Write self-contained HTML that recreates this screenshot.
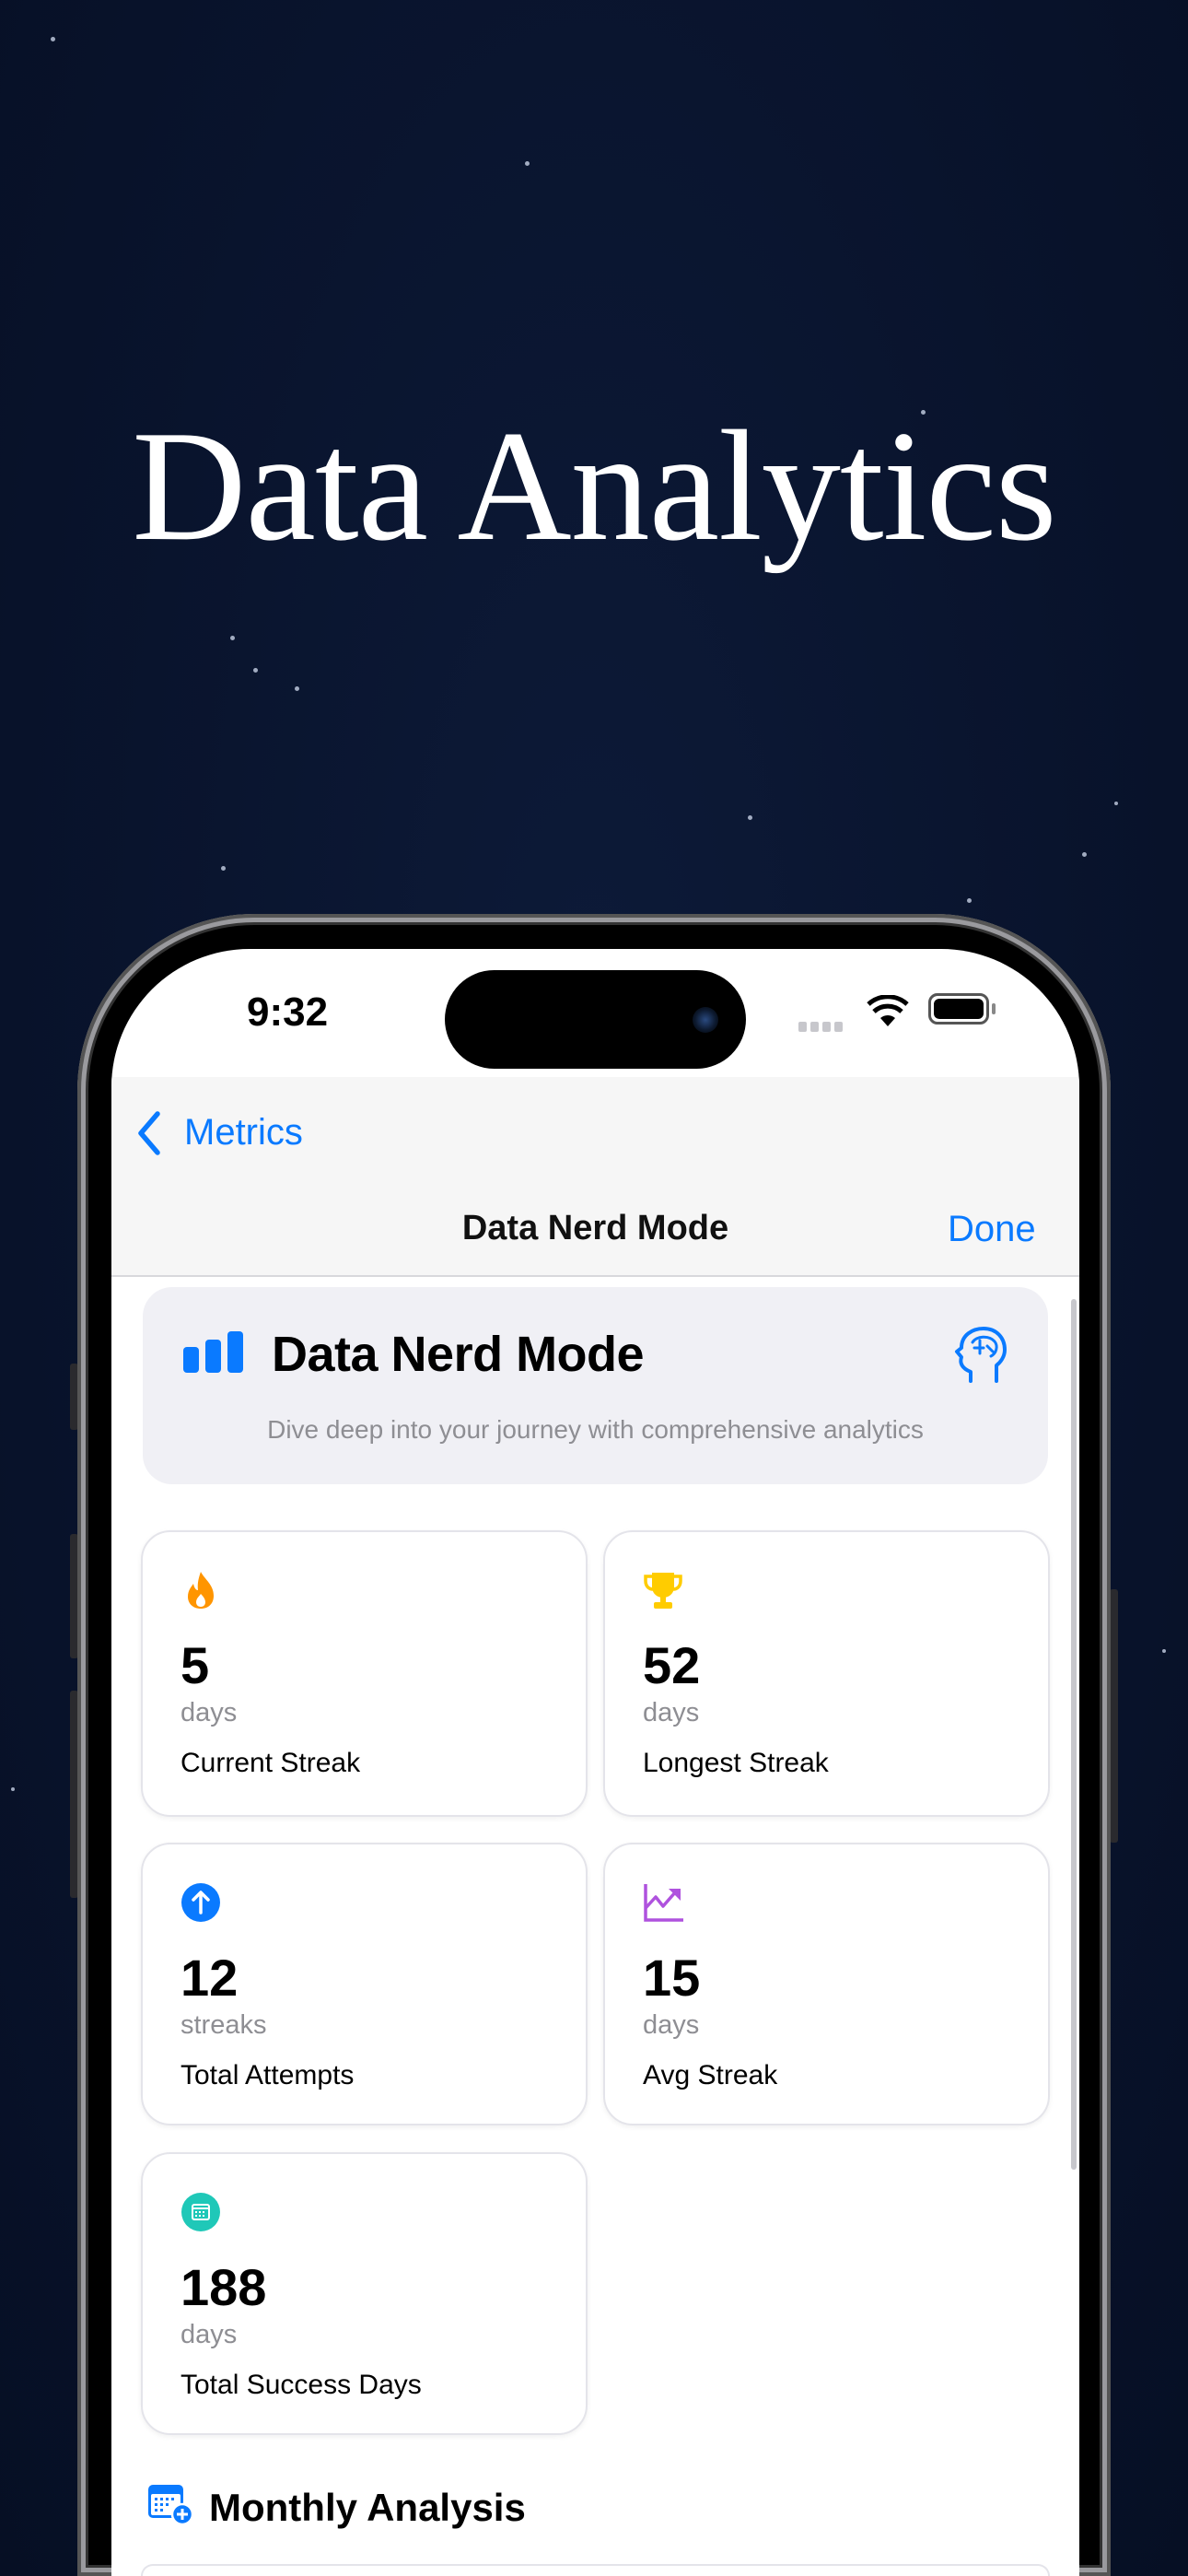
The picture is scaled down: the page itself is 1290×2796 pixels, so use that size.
<!DOCTYPE html>
<html><head><meta charset="utf-8"><style>
*{margin:0;padding:0;box-sizing:border-box}
html{width:1290px;height:2796px;overflow:hidden}
body{width:1290px;height:2796px;overflow:hidden;background:#0a1530;position:relative;font-family:"Liberation Sans",sans-serif}
.bg{position:absolute;inset:0;background:radial-gradient(ellipse at 50% 40%,#0d1a38 0%,#08122a 70%,#060f24 100%)}
.star{position:absolute;width:5px;height:5px;border-radius:50%;background:#c8d2e6;opacity:.8}
h1{position:absolute;top:430px;left:0;width:1290px;text-align:center;font-family:"Liberation Serif",serif;font-weight:400;font-size:172px;color:#fff;letter-spacing:-1px;white-space:nowrap}
.btn{position:absolute;background:#2a2a2e;border-radius:3px}
.frame{position:absolute;left:84px;top:992px;width:1122px;height:1804px;border-radius:192px 192px 0 0;background:#000;box-shadow:inset 0 0 0 4px #555,inset 0 0 0 9px #9a9a9e,inset 0 0 0 12px #333}
.screen{position:absolute;left:121px;top:1030px;width:1051px;height:1766px;border-radius:150px 150px 0 0;background:#fff;overflow:hidden}
.island{position:absolute;left:362px;top:23px;width:327px;height:107px;border-radius:54px;background:#000}
.cam{position:absolute;right:30px;top:40px;width:28px;height:28px;border-radius:50%;background:radial-gradient(circle,#2a4a80 0,#0d1a30 55%,#000 100%)}
.time{position:absolute;left:147px;top:44px;font-size:44px;font-weight:700;color:#000}
.nav{position:absolute;left:0;top:139px;width:1051px;height:217px;background:#f6f6f6;border-bottom:2px solid #d8d8dc}
.blue{color:#0a7aff}
.card{position:absolute;background:#fff;border:2px solid #e4e4ea;border-radius:32px;box-shadow:0 2px 6px rgba(0,0,0,.06)}
.card .ic{position:absolute;left:41px;top:41px;width:44px;height:44px}
.card .num{position:absolute;left:41px;top:112px;font-size:56px;font-weight:700;color:#000}
.card .unit{position:absolute;left:41px;top:180px;font-size:29px;color:#8e8e93}
.card .lab{position:absolute;left:41px;top:234px;font-size:30px;color:#000}
</style></head><body>
<div class="bg"></div>
<div class="star" style="left:55px;top:40px"></div>
<div class="star" style="left:570px;top:175px"></div>
<div class="star" style="left:250px;top:690px"></div>
<div class="star" style="left:275px;top:725px"></div>
<div class="star" style="left:320px;top:745px"></div>
<div class="star" style="left:812px;top:885px"></div>
<div class="star" style="left:1050px;top:975px"></div>
<div class="star" style="left:1175px;top:925px"></div>
<div class="star" style="left:1000px;top:445px"></div>
<div class="star" style="left:240px;top:940px"></div>
<div class="star" style="left:1210px;top:870px;width:4px;height:4px"></div>
<div class="star" style="left:12px;top:1940px;width:4px;height:4px"></div>
<div class="star" style="left:1262px;top:1790px;width:4px;height:4px"></div>
<h1>Data Analytics</h1>
<div class="btn" style="left:76px;top:1480px;width:9px;height:72px"></div>
<div class="btn" style="left:76px;top:1665px;width:9px;height:135px"></div>
<div class="btn" style="left:76px;top:1835px;width:9px;height:225px"></div>
<div class="btn" style="left:1205px;top:1725px;width:9px;height:275px"></div>
<div class="frame"></div>
<div class="screen">
  <div class="time">9:32</div>
  <div class="island"><div class="cam"></div></div>
  <div style="position:absolute;left:746px;top:79px;display:flex;gap:4px"><span style="width:9px;height:11px;background:#c7c7cc;border-radius:2px"></span><span style="width:9px;height:11px;background:#c7c7cc;border-radius:2px"></span><span style="width:9px;height:11px;background:#c7c7cc;border-radius:2px"></span><span style="width:9px;height:11px;background:#c7c7cc;border-radius:2px"></span></div>
  <svg style="position:absolute;left:820px;top:50px" width="46" height="36" viewBox="0 0 46 36"><path d="M23 34 L15 25 A12 12 0 0 1 31 25 Z" fill="#000"/><path d="M8 18 A22 22 0 0 1 38 18" stroke="#000" stroke-width="5" fill="none"/><path d="M2 10 A31 31 0 0 1 44 10" stroke="#000" stroke-width="5" fill="none"/></svg>
  <div style="position:absolute;left:887px;top:48px;width:66px;height:34px;border:3px solid #555;border-radius:10px;padding:3px"><div style="width:100%;height:100%;background:#000;border-radius:6px"></div></div>
  <div style="position:absolute;left:956px;top:59px;width:4px;height:12px;background:#888;border-radius:2px"></div>
  <div class="nav">
    <svg style="position:absolute;left:26px;top:36px" width="30" height="50" viewBox="0 0 30 50"><path d="M24 4 L6 25 L24 46" stroke="#0a7aff" stroke-width="5.5" fill="none" stroke-linecap="round" stroke-linejoin="round"/></svg>
    <div class="blue" style="position:absolute;left:79px;top:38px;font-size:40px">Metrics</div>
    <div style="position:absolute;left:0;width:1051px;text-align:center;top:143px;font-size:38px;font-weight:700;color:#111">Data Nerd Mode</div>
    <div class="blue" style="position:absolute;left:908px;top:143px;font-size:40px">Done</div>
  </div>
  <div style="position:absolute;left:34px;top:367px;width:983px;height:214px;background:#f0f0f5;border-radius:32px">
    <div style="position:absolute;left:44px;top:65px;width:17px;height:28px;background:#0a7aff;border-radius:4px"></div>
    <div style="position:absolute;left:68px;top:57px;width:17px;height:36px;background:#0a7aff;border-radius:4px"></div>
    <div style="position:absolute;left:92px;top:48px;width:17px;height:45px;background:#0a7aff;border-radius:4px"></div>
    <div style="position:absolute;left:140px;top:42px;font-size:54px;font-weight:700;color:#000;letter-spacing:-.5px">Data Nerd Mode</div>
    <svg style="position:absolute;left:881px;top:42px" width="58" height="64" viewBox="0 0 58 64"><path d="M18 60 V50 C8 46 6 40 8 34 L3 28 L8 24 C8 10 20 3 32 3 C46 3 55 13 55 26 C55 34 50 40 46 43 V60" stroke="#0a7aff" stroke-width="4" fill="none" stroke-linejoin="round" stroke-linecap="round"/><path d="M20 18 C24 11 38 10 44 17 C48 22 46 30 40 33 M22 24 H32 M28 16 V30 M36 22 L42 28" stroke="#0a7aff" stroke-width="3" fill="none" stroke-linecap="round"/></svg>
    <div style="position:absolute;left:0;width:983px;text-align:center;top:139px;font-size:28px;color:#8e8e93">Dive deep into your journey with comprehensive analytics</div>
  </div>
  <div style="position:absolute;left:1042px;top:380px;width:6px;height:945px;background:#c7c7cc;border-radius:3px"></div>

  <div class="card" style="left:32px;top:631px;width:485px;height:311px">
    <svg class="ic" viewBox="0 0 44 44"><path d="M22 2 C26 10 36 16 36 28 C36 37 30 42 22 42 C14 42 8 37 8 29 C8 22 12 18 14 15 C15 20 17 22 19 22 C18 14 20 8 22 2 Z" fill="#ff9500"/><path d="M22 26 C25 29 27 32 27 35 C27 38 25 40 22 40 C19 40 17 38 17 35 C17 31 20 29 22 26Z" fill="#fff"/></svg>
    <div class="num">5</div><div class="unit">days</div><div class="lab">Current Streak</div>
  </div>
  <div class="card" style="left:534px;top:631px;width:485px;height:311px">
    <svg class="ic" viewBox="0 0 44 44"><path d="M10 3 H34 V18 C34 26 28 30 22 30 C16 30 10 26 10 18 Z" fill="#ffcc00"/><path d="M10 7 H3 V12 C3 18 7 21 11 21 M34 7 H41 V12 C41 18 37 21 33 21" stroke="#ffcc00" stroke-width="3.5" fill="none"/><rect x="19" y="29" width="6" height="7" fill="#ffcc00"/><rect x="12" y="35" width="20" height="7" rx="2" fill="#ffcc00"/></svg>
    <div class="num">52</div><div class="unit">days</div><div class="lab">Longest Streak</div>
  </div>
  <div class="card" style="left:32px;top:970px;width:485px;height:307px">
    <svg class="ic" viewBox="0 0 44 44"><circle cx="22" cy="22" r="21" fill="#0a7aff"/><path d="M22 33 V12 M14 19 L22 11 L30 19" stroke="#fff" stroke-width="3.5" fill="none" stroke-linecap="round" stroke-linejoin="round"/></svg>
    <div class="num">12</div><div class="unit">streaks</div><div class="lab">Total Attempts</div>
  </div>
  <div class="card" style="left:534px;top:970px;width:485px;height:307px">
    <svg class="ic" viewBox="0 0 44 44"><path d="M3 2 V41 H44" stroke="#af52de" stroke-width="3.5" fill="none"/><path d="M3 28 L14 16 L22 26 L36 10" stroke="#af52de" stroke-width="3.5" fill="none" stroke-linejoin="round"/><path d="M28 7 H41 V20 Z" fill="#af52de"/></svg>
    <div class="num">15</div><div class="unit">days</div><div class="lab">Avg Streak</div>
  </div>
  <div class="card" style="left:32px;top:1306px;width:485px;height:307px">
    <svg class="ic" viewBox="0 0 44 44"><circle cx="22" cy="22" r="21" fill="#1fc8b8"/><rect x="13" y="14" width="18" height="16" rx="2" fill="none" stroke="#fff" stroke-width="2"/><path d="M13 18 H31" stroke="#fff" stroke-width="2"/><g fill="#fff"><rect x="16" y="21" width="2" height="2"/><rect x="20" y="21" width="2" height="2"/><rect x="24" y="21" width="2" height="2"/><rect x="16" y="25" width="2" height="2"/><rect x="20" y="25" width="2" height="2"/><rect x="24" y="25" width="2" height="2"/></g></svg>
    <div class="num">188</div><div class="unit">days</div><div class="lab">Total Success Days</div>
  </div>
  <svg style="position:absolute;left:38px;top:1665px" width="52" height="46" viewBox="0 0 52 46"><rect x="2" y="2" width="38" height="36" rx="5" fill="#0a7aff"/><rect x="5" y="12" width="32" height="23" rx="2" fill="#fff"/><g fill="#0a7aff"><rect x="9" y="16" width="3" height="3"/><rect x="15" y="16" width="3" height="3"/><rect x="21" y="16" width="3" height="3"/><rect x="27" y="16" width="3" height="3"/><rect x="9" y="22" width="3" height="3"/><rect x="15" y="22" width="3" height="3"/><rect x="21" y="22" width="3" height="3"/><rect x="9" y="28" width="3" height="3"/><rect x="15" y="28" width="3" height="3"/></g><circle cx="39" cy="34" r="11" fill="#0a7aff" stroke="#fff" stroke-width="2.5"/><path d="M39 28 V40 M33 34 H45" stroke="#fff" stroke-width="3"/></svg>
  <div style="position:absolute;left:106px;top:1668px;font-size:42px;font-weight:700;color:#000">Monthly Analysis</div>
  <div class="card" style="left:32px;top:1753px;width:987px;height:13px;border-bottom:none;border-radius:32px 32px 0 0;box-shadow:none"></div>
</div>
</body></html>
